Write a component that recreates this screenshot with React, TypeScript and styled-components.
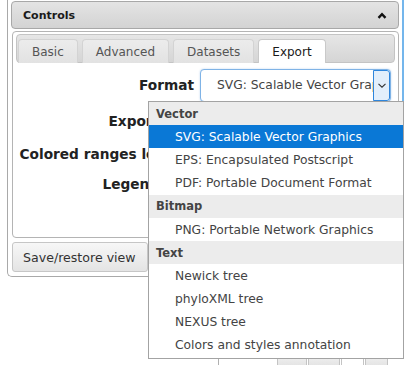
import React from "react";
import styled, { createGlobalStyle } from "styled-components";

const Global = createGlobalStyle`
  html, body { margin: 0; padding: 0; background: #fff; }
  body { font-family: "DejaVu Sans", Verdana, sans-serif; color: #333; }
  * { box-sizing: border-box; }
`;

const Page = styled.div`
  position: relative;
  width: 406px;
  height: 365px;
  overflow: hidden;
  padding-left: 7px;
`;

const OuterBox = styled.div`
  width: 397px;
  margin-top: -4px;
  border: 1px solid #a9a9a9;
  border-right: 2px solid #74b6ec;
  border-radius: 0 0 5px 5px;
  padding: 4px 3px 4px 3px;
`;

const Header = styled.div`
  height: 28px;
  display: flex;
  align-items: center;
  justify-content: space-between;
  padding: 0 11px 0 11px;
  border: 1px solid #a8a8a8;
  border-radius: 4px;
  background: linear-gradient(#e4e4e4, #d3d3d3);
  font-weight: bold;
  font-size: 11px;
  color: #1a1a1a;
`;

const TabWidget = styled.div`
  margin: 2px 0 0 1px;
  height: 207px;
  border: 1px solid #b4b4b4;
  border-radius: 4px;
  padding: 2px 3px 3px 3px;
  display: flex;
  flex-direction: column;
`;

const TabBar = styled.div`
  height: 29px;
  border: 1px solid #c4c4c4;
  border-radius: 4px;
  background: linear-gradient(#e6e6e6, #d5d5d5);
  padding: 4px 3px 0 1px;
  display: flex;
  align-items: flex-end;
  gap: 4px;
`;

const Tab = styled.div<{ $active?: boolean }>`
  height: 24px;
  margin-bottom: -1px;
  padding: 0 13px;
  display: flex;
  align-items: center;
  border: 1px solid ${(p) => (p.$active ? "#c9c9c9" : "#d3d3d3")};
  border-bottom: none;
  border-radius: 4px 4px 0 0;
  background: ${(p) => (p.$active ? "#fff" : "linear-gradient(#ececec, #e2e2e2)")};
  color: ${(p) => (p.$active ? "#1a1a1a" : "#555")};
  font-size: 12px;
`;

const FormPanel = styled.div`
  flex: 1;
  background: #fff;
  padding-top: 5px;
  display: flex;
  flex-direction: column;
`;

const Row = styled.div<{ $h: number }>`
  height: ${(p) => p.$h}px;
  display: grid;
  grid-template-columns: 178px 1fr;
  column-gap: 6px;
  align-items: center;
`;

const Label = styled.div`
  text-align: right;
  font-weight: bold;
  font-size: 13.7px;
  color: #222;
  white-space: nowrap;
`;

const SelectBox = styled.div`
  width: 191px;
  height: 33px;
  border: 1px solid #7fb3e6;
  border-radius: 4px;
  box-shadow: 0 0 2px rgba(90, 150, 220, 0.45);
  display: flex;
  align-items: stretch;
  overflow: hidden;
  background: #fff;
`;

const SelectText = styled.div`
  flex: 1;
  padding-left: 16px;
  display: flex;
  align-items: center;
  white-space: nowrap;
  overflow: hidden;
  font-size: 12.3px;
  color: #444;
`;

const ArrowBox = styled.div`
  width: 17px;
  border: 1px solid #2f86dc;
  border-radius: 0 3px 3px 0;
  background: #e3effb;
  display: flex;
  align-items: center;
  justify-content: center;
`;

const SaveButton = styled.div`
  margin: 4px 0 0 1px;
  width: 136px;
  height: 30px;
  border: 1px solid #c6c6c6;
  border-radius: 3px;
  background: linear-gradient(#f7f7f7, #e4e4e4);
  display: flex;
  align-items: center;
  padding-left: 10px;
  font-size: 12.6px;
  color: #333;
  white-space: nowrap;
`;

const TreePanel = styled.div`
  margin: 4px 0 0 211px;
  height: 100px;
  border-left: 1px solid #b0b0b0;
  padding: 74px 0 0 58px;
  display: flex;
  gap: 1px;
`;

const PagerButton = styled.div<{ $w: number; $white?: boolean }>`
  width: ${(p) => p.$w}px;
  height: 18px;
  border: 1px solid #c4c4c4;
  border-radius: 3px;
  background: ${(p) => (p.$white ? "#fff" : "linear-gradient(#f0f0f0, #dcdcdc)")};
`;

const Dropdown = styled.div`
  position: absolute;
  left: 148px;
  top: 101px;
  width: 256px;
  border: 1px solid #a3a3a3;
  background: #fff;
  padding-bottom: 1px;
`;

const Option = styled.div<{ $group?: boolean; $selected?: boolean }>`
  height: 23.2px;
  display: flex;
  align-items: center;
  padding-left: ${(p) => (p.$group ? 7 : 26)}px;
  white-space: nowrap;
  font-size: ${(p) => (p.$group ? "11.5px" : "12.3px")};
  font-weight: ${(p) => (p.$group ? "bold" : "normal")};
  background: ${(p) => (p.$selected ? "#0a78d6" : p.$group ? "#ececec" : "#fff")};
  color: ${(p) => (p.$selected ? "#fff" : "#444")};
`;

type Item = { label: string; group?: boolean; selected?: boolean };

const items: Item[] = [
  { label: "Vector", group: true },
  { label: "SVG: Scalable Vector Graphics", selected: true },
  { label: "EPS: Encapsulated Postscript" },
  { label: "PDF: Portable Document Format" },
  { label: "Bitmap", group: true },
  { label: "PNG: Portable Network Graphics" },
  { label: "Text", group: true },
  { label: "Newick tree" },
  { label: "phyloXML tree" },
  { label: "NEXUS tree" },
  { label: "Colors and styles annotation" },
];

export default function App() {
  return (
    <Page>
      <Global />
      <OuterBox>
        <Header>
          <span>Controls</span>
          <svg width="10" height="7" viewBox="0 0 10 7">
            <polyline points="1.5,5.8 5,2.2 8.5,5.8" fill="none" stroke="#111" strokeWidth="2.4" />
          </svg>
        </Header>
        <TabWidget>
          <TabBar>
            <Tab>Basic</Tab>
            <Tab>Advanced</Tab>
            <Tab>Datasets</Tab>
            <Tab $active>Export</Tab>
          </TabBar>
          <FormPanel>
            <Row $h={34}>
              <Label>Format</Label>
              <SelectBox>
                <SelectText>SVG: Scalable Vector Graphics</SelectText>
                <ArrowBox>
                  <svg width="8" height="5" viewBox="0 0 8 5">
                    <polyline points="0.5,0.8 4,4.2 7.5,0.8" fill="none" stroke="#333" strokeWidth="1.1" />
                  </svg>
                </ArrowBox>
              </SelectBox>
            </Row>
            <Row $h={38}>
              <Label>Export size</Label>
            </Row>
            <Row $h={28}>
              <Label>Colored ranges legend</Label>
            </Row>
            <Row $h={32}>
              <Label>Legend size</Label>
            </Row>
          </FormPanel>
        </TabWidget>
        <SaveButton>Save/restore view</SaveButton>
      </OuterBox>
      <TreePanel>
        <PagerButton $w={30} />
        <PagerButton $w={32} />
        <PagerButton $w={23} $white />
        <PagerButton $w={23} />
      </TreePanel>
      <Dropdown>
        {items.map((it) => (
          <Option key={it.label} $group={it.group} $selected={it.selected}>
            {it.label}
          </Option>
        ))}
      </Dropdown>
    </Page>
  );
}
